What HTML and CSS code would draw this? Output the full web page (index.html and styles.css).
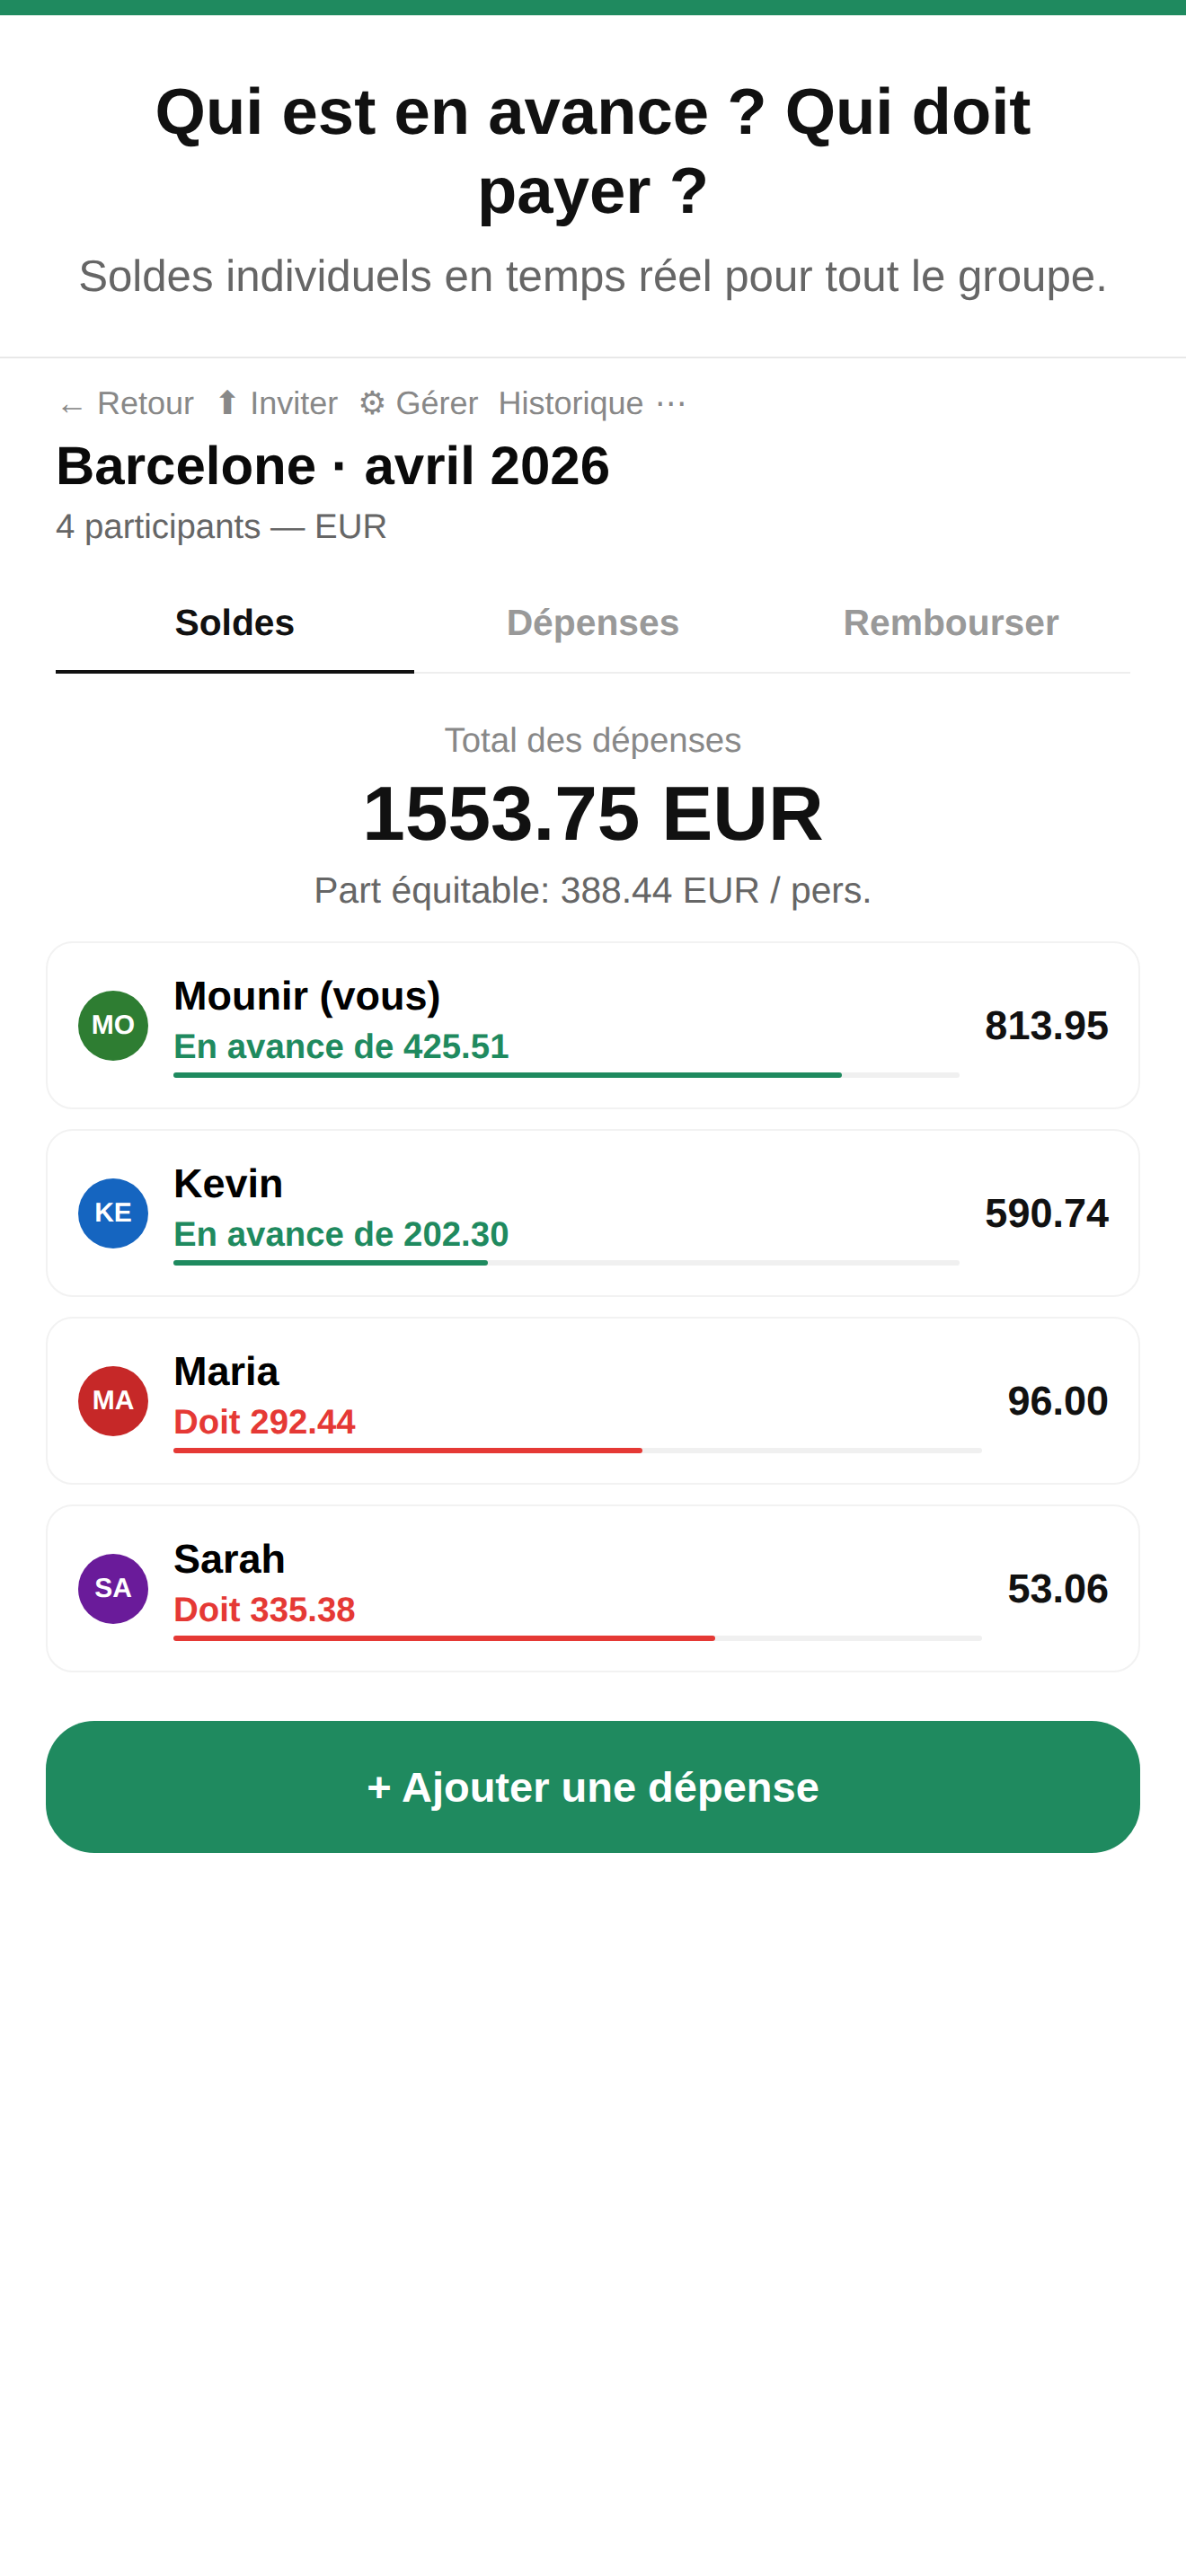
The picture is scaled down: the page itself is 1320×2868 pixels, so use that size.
FILE: index.html
```html
<!DOCTYPE html>
<html lang="fr">
<head>
  <meta charset="UTF-8" />
  <title>Barcelone · avril 2026</title>
  <link rel="stylesheet" href="styles.css">
</head>
<body>
  <div class="topbar"></div>

  <header class="hero">
    <h1>Qui est en avance ? Qui doit payer ?</h1>
    <p>Soldes individuels en temps réel pour tout le groupe.</p>
  </header>

  <section class="trip">
    <nav class="links">
      <a class="back">←</a><a>Retour</a>
      <a class="gap">⬆ Inviter</a>
      <a class="gap">⚙ Gérer</a>
      <a class="gap">Historique</a>
      <a class="more">⋯</a>
    </nav>
    <h2>Barcelone · avril 2026</h2>
    <div class="meta">4 participants — EUR</div>

    <div class="tabs">
      <div class="tab active">Soldes</div>
      <div class="tab">Dépenses</div>
      <div class="tab">Rembourser</div>
    </div>
  </section>

  <section class="total">
    <div class="total-label">Total des dépenses</div>
    <div class="total-value">1553.75 EUR</div>
    <div class="total-share">Part équitable: 388.44 EUR / pers.</div>
  </section>

  <section class="cards">
    <div class="card">
      <div class="avatar green">MO</div>
      <div class="info">
        <div class="name">Mounir (vous)</div>
        <div class="status plus">En avance de 425.51</div>
        <div class="bar"><div class="fill plus-bg" style="width:85%"></div></div>
      </div>
      <div class="amount">813.95</div>
    </div>
    <div class="card">
      <div class="avatar blue">KE</div>
      <div class="info">
        <div class="name">Kevin</div>
        <div class="status plus">En avance de 202.30</div>
        <div class="bar"><div class="fill plus-bg" style="width:40%"></div></div>
      </div>
      <div class="amount">590.74</div>
    </div>
    <div class="card">
      <div class="avatar red">MA</div>
      <div class="info">
        <div class="name">Maria</div>
        <div class="status minus">Doit 292.44</div>
        <div class="bar"><div class="fill minus-bg" style="width:58%"></div></div>
      </div>
      <div class="amount">96.00</div>
    </div>
    <div class="card">
      <div class="avatar purple">SA</div>
      <div class="info">
        <div class="name">Sarah</div>
        <div class="status minus">Doit 335.38</div>
        <div class="bar"><div class="fill minus-bg" style="width:67%"></div></div>
      </div>
      <div class="amount">53.06</div>
    </div>
  </section>

  <button class="add">+ Ajouter une dépense</button>
</body>
</html>
```

FILE: styles.css
```css
* {
  box-sizing: border-box;
}
body {
  margin: 0;
  background: #fff;
  color: #111;
  font-family: "Liberation Sans", Arial, sans-serif;
  text-rendering: geometricPrecision;
}
.topbar {
  height: 17px;
  background: #1f8a5f;
}
.hero {
  padding: 64px 120px 54px;
  text-align: center;
  border-bottom: 2px solid #e8e8e8;
}
.hero h1 {
  margin: 0;
  font-size: 72.5px;
  line-height: 88px;
  font-weight: 700;
  color: #111;
}
.hero p {
  margin: 16px -68px 0;
  font-size: 49.2px;
  line-height: 70px;
  color: #666;
}
.trip {
  padding: 24px 62px 0;
}
.links {
  display: flex;
  align-items: baseline;
  font-size: 36px;
  line-height: 52px;
  color: #888;
}
.back {
  margin-right: 10px;
}
.gap {
  margin-left: 22px;
}
.more {
  margin-left: 12px;
}
.trip h2 {
  margin: 6px 0 0;
  font-size: 60px;
  line-height: 76px;
  color: #0a0a0a;
}
.meta {
  margin-top: 4px;
  font-size: 38.4px;
  line-height: 52px;
  color: #666;
}
.tabs {
  display: flex;
  margin-top: 26px;
  border-bottom: 2px solid #eee;
}
.tab {
  flex: 1;
  margin-bottom: -2px;
  padding: 28px 0 27px;
  text-align: center;
  font-size: 40.8px;
  line-height: 52px;
  font-weight: 700;
  color: #999;
  border-bottom: 4px solid transparent;
}
.tab.active {
  color: #111;
  border-bottom-color: #111;
}
.total {
  padding-top: 49px;
  text-align: center;
}
.total-label {
  font-size: 38.4px;
  line-height: 52px;
  color: #888;
}
.total-value {
  margin-top: 6px;
  font-size: 85.5px;
  line-height: 100px;
  font-weight: 700;
}
.total-share {
  margin-top: 6px;
  font-size: 40.8px;
  line-height: 56px;
  color: #666;
}
.cards {
  display: flex;
  flex-direction: column;
  gap: 22px;
  padding: 29px 51px 0;
}
.card {
  display: flex;
  align-items: center;
  gap: 28px;
  height: 187px;
  padding: 0 33px 0 34px;
  border: 2px solid #f2f2f2;
  border-radius: 30px;
}
.avatar {
  flex: none;
  width: 78px;
  height: 78px;
  border-radius: 50%;
  display: flex;
  align-items: center;
  justify-content: center;
  color: #fff;
  font-size: 30px;
  font-weight: 700;
}
.green { background: #2e7d32; }
.blue { background: #1565c0; }
.red { background: #c62828; }
.purple { background: #6a1b9a; }
.info {
  flex: 1;
  padding-bottom: 3px;
}
.name {
  font-size: 45px;
  line-height: 56px;
  font-weight: 700;
  color: #000;
}
.status {
  margin-top: 3px;
  font-size: 38.4px;
  line-height: 52px;
  font-weight: 700;
}
.plus { color: #1f8a5f; }
.minus { color: #e53935; }
.bar {
  height: 6px;
  margin-top: 2px;
  border-radius: 3px;
  background: #f0f0f0;
}
.fill {
  height: 100%;
  border-radius: 3px;
}
.plus-bg { background: #1f8a5f; }
.minus-bg { background: #e53935; }
.amount {
  font-size: 45px;
  font-weight: 700;
}
.add {
  display: block;
  width: 1218px;
  height: 147px;
  margin: 54px 51px 0;
  border: none;
  border-radius: 54px;
  background: #1f8a5f;
  color: #fff;
  font-family: inherit;
  font-size: 47px;
  font-weight: 700;
}
```
